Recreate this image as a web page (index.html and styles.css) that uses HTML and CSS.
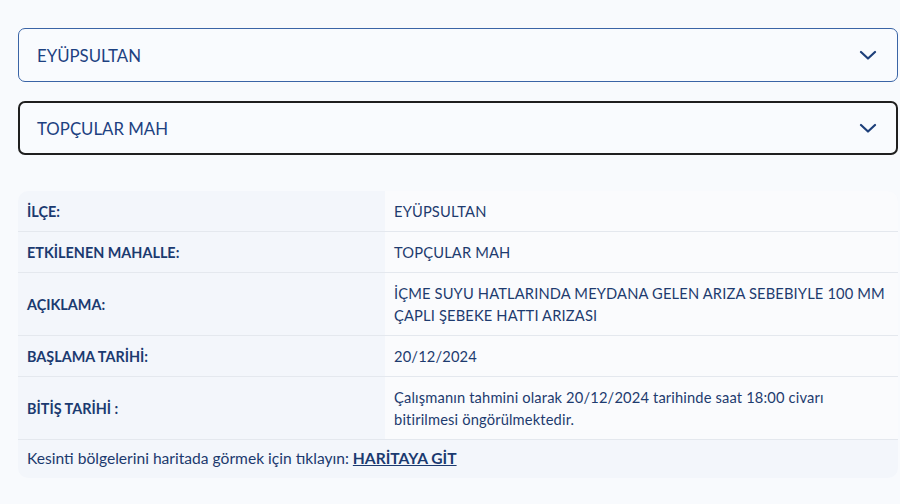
FILE: index.html
```html
<!DOCTYPE html>
<html lang="tr">
<head>
    <meta charset="UTF-8">
    <meta name="viewport" content="width=device-width, initial-scale=1.0">
    <title>Su Kesintisi</title>
    <link rel="stylesheet" href="styles.css">
</head>
<body>
    <div class="page">
        <div class="select">
            <span>EYÜPSULTAN</span>
            <svg class="chevron" width="18" height="10" viewBox="0 0 18 10"><path d="M2 2l7 6.5 7-6.5" fill="none" stroke="#1d3f7a" stroke-width="2.2" stroke-linecap="round" stroke-linejoin="round"/></svg>
        </div>
        <div class="select focused">
            <span>TOPÇULAR MAH</span>
            <svg class="chevron" width="18" height="10" viewBox="0 0 18 10"><path d="M2 2l7 6.5 7-6.5" fill="none" stroke="#1d3f7a" stroke-width="2.2" stroke-linecap="round" stroke-linejoin="round"/></svg>
        </div>

        <div class="info">
            <div class="row">
                <div class="label">İLÇE:</div>
                <div class="value">EYÜPSULTAN</div>
            </div>
            <div class="row">
                <div class="label">ETKİLENEN MAHALLE:</div>
                <div class="value">TOPÇULAR MAH</div>
            </div>
            <div class="row">
                <div class="label">AÇIKLAMA:</div>
                <div class="value">İÇME SUYU HATLARINDA MEYDANA GELEN ARIZA SEBEBIYLE 100 MM ÇAPLI ŞEBEKE HATTI ARIZASI</div>
            </div>
            <div class="row">
                <div class="label">BAŞLAMA TARİHİ:</div>
                <div class="value">20/12/2024</div>
            </div>
            <div class="row">
                <div class="label">BİTİŞ TARİHİ :</div>
                <div class="value">Çalışmanın tahmini olarak 20/12/2024 tarihinde saat 18:00 civarı bitirilmesi öngörülmektedir.</div>
            </div>
            <div class="map-row">
                Kesinti bölgelerini haritada görmek için tıklayın: <a href="#">HARİTAYA GİT</a>
            </div>
        </div>
    </div>
</body>
</html>
```

FILE: styles.css
```css
body {
    margin: 0;
    background-color: #f8fafd;
    font-family: Lato, "Open Sans", sans-serif;
    color: #1c3a6e;
}

.page {
    padding: 28px 2px 0 18px;
}

.select {
    display: flex;
    align-items: center;
    justify-content: space-between;
    height: 52px;
    padding: 0 20px 0 18px;
    border: 1px solid #3a64a6;
    border-radius: 7px;
    background-color: #f9fbfe;
    font-size: 16.8px;
    color: #1d4181;
    margin-bottom: 19px;
}

.select.focused {
    border: 2px solid #1f1f1f;
    height: 50px;
    padding-left: 17px;
    padding-right: 19px;
    margin-bottom: 36px;
}

.info {
    border-radius: 10px;
    overflow: hidden;
    background-color: #f3f6fb;
    font-size: 14.7px;
}

.row {
    display: flex;
    border-bottom: 1px solid #e4e8ee;
}

.label {
    width: 367px;
    flex-shrink: 0;
    padding: 9px;
    box-sizing: border-box;
    display: flex;
    align-items: center;
    font-size: 14.4px;
    font-weight: bold;
    color: #1b3a70;
}

.value {
    flex: 1;
    background-color: #fafbfd;
    padding: 9px;
    line-height: 22px;
    letter-spacing: 0.15px;
    color: #1e3b6f;
}

.map-row {
    padding: 10px 9px 11px;
    line-height: 17px;
    font-size: 15.6px;
}

.map-row a {
    color: #1b3a70;
    font-weight: bold;
}
```
